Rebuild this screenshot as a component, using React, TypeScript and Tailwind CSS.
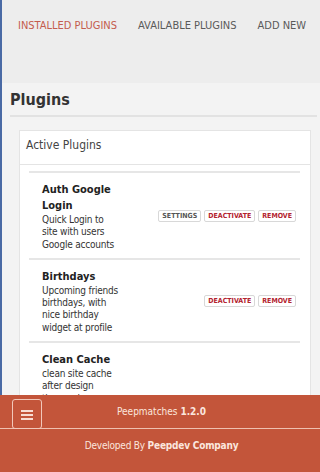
import React from 'react';

const plugins = [
  {
    name: 'Auth Google Login',
    desc: 'Quick Login to site with users Google accounts',
    settings: true,
  },
  {
    name: 'Birthdays',
    desc: 'Upcoming friends birthdays, with nice birthday widget at profile',
    settings: false,
  },
  {
    name: 'Clean Cache',
    desc: 'clean site cache after design theme changes, plugins install, update or remove and after every core upgrade of your social network',
    settings: false,
  },
];

const Btn = ({ label, red }: { label: string; red?: boolean }) => (
  <span
    className={`border border-[#d8d8d8] rounded-[2px] bg-white px-[3px] h-[12px] leading-[10px] text-[7px] font-bold ${
      red ? 'text-[#b3222e]' : 'text-[#555]'
    }`}
  >
    {label}
  </span>
);

export default function App() {
  return (
    <div
      className="h-[472px] w-[320px] flex flex-col overflow-hidden bg-[#f3f3f3] text-[#333]"
      style={{ fontFamily: '"DejaVu Sans Condensed", Tahoma, "DejaVu Sans", sans-serif' }}
    >
      <div className="flex-1 min-h-0 overflow-hidden border-l-[2px] border-[#4a6aa5]">
        {/* Tabs */}
        <div className="h-[83px] bg-[#ededed] flex items-start gap-[21px] pl-[16px] pt-[18px] text-[11px] leading-[16px] whitespace-nowrap">
          <span className="text-[#c45c4e]">INSTALLED PLUGINS</span>
          <span className="text-[#5a5a5a]">AVAILABLE PLUGINS</span>
          <span className="text-[#5a5a5a]">ADD NEW</span>
        </div>

        <div className="pl-[8px] pr-[3px]">
          <h1 className="text-[16px] leading-[20px] font-bold text-[#333] pt-[7px] pb-[5px] border-b-[2px] border-[#e2e2e2]">
            Plugins
          </h1>

          <div className="mt-[13px] ml-[9px] mr-[6px] bg-white border border-[#e4e4e4]">
            <div className="px-[6px] pt-[6px] pb-[11px] text-[12px] leading-[16px] text-[#444] border-b border-[#e4e4e4]">
              Active Plugins
            </div>
            <div className="pl-[9px] pr-[10px] pt-[6px]">
              {plugins.map((p) => (
                <div
                  key={p.name}
                  className="flex items-center border-t-[2px] border-[#e6e6e6] pl-[13px] pr-[4px] pt-[9px] pb-[7px]"
                >
                  <div className="w-[77px] shrink-0">
                    <div className="text-[11px] font-bold leading-[16px] text-[#222]">{p.name}</div>
                    <div className="text-[10px] leading-[12.3px] tracking-[-0.2px] text-[#333]">{p.desc}</div>
                  </div>
                  <div className="ml-auto flex gap-[3px]">
                    {p.settings && <Btn label="SETTINGS" />}
                    <Btn label="DEACTIVATE" red />
                    <Btn label="REMOVE" red />
                  </div>
                </div>
              ))}
            </div>
          </div>
        </div>
      </div>

      {/* Footer */}
      <footer className="shrink-0 h-[77px] bg-[#c3553a] text-[#fbe6de]">
        <div className="h-[34px] border-b border-[#efc0b0] grid grid-cols-[1fr_auto_1fr] items-center">
          <div className="self-end pl-[12px]">
            <button className="w-[30px] h-[30px] -mb-[1px] rounded-[3px] border border-[#f2c8ba] flex flex-col items-center justify-center gap-[2px] pt-[1px]">
              <span className="block w-[12px] h-[2px] bg-[#f8ddd3]" />
              <span className="block w-[12px] h-[2px] bg-[#f8ddd3]" />
              <span className="block w-[12px] h-[2px] bg-[#f8ddd3]" />
            </button>
          </div>
          <span className="text-[10px] leading-[14px] pl-[3px]">
            Peepmatches <b>1.2.0</b>
          </span>
          <div />
        </div>
        <div className="text-center text-[10px] leading-[14px] tracking-[-0.2px] pt-[10px] pl-[3px]">
          Developed By <b>Peepdev Company</b>
        </div>
      </footer>
    </div>
  );
}
